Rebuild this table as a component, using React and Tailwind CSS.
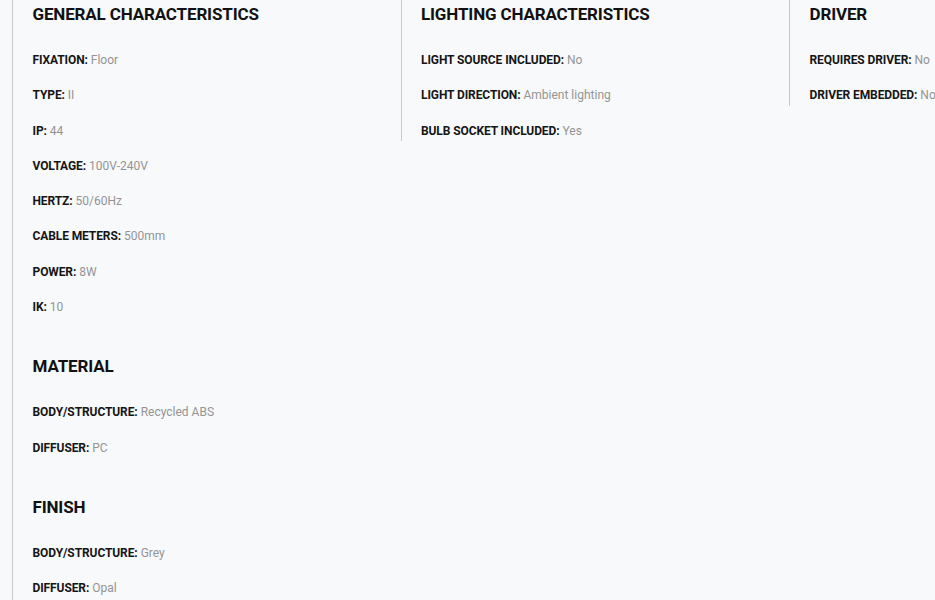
import React from "react";

const columns = [
  [
    {
      title: "GENERAL CHARACTERISTICS",
      rows: [
        ["FIXATION", "Floor"],
        ["TYPE", "II"],
        ["IP", "44"],
        ["VOLTAGE", "100V-240V"],
        ["HERTZ", "50/60Hz"],
        ["CABLE METERS", "500mm"],
        ["POWER", "8W"],
        ["IK", "10"],
      ],
    },
    {
      title: "MATERIAL",
      rows: [
        ["BODY/STRUCTURE", "Recycled ABS"],
        ["DIFFUSER", "PC"],
      ],
    },
    {
      title: "FINISH",
      rows: [
        ["BODY/STRUCTURE", "Grey"],
        ["DIFFUSER", "Opal"],
      ],
    },
  ],
  [
    {
      title: "LIGHTING CHARACTERISTICS",
      rows: [
        ["LIGHT SOURCE INCLUDED", "No"],
        ["LIGHT DIRECTION", "Ambient lighting"],
        ["BULB SOCKET INCLUDED", "Yes"],
      ],
    },
  ],
  [
    {
      title: "DRIVER",
      rows: [
        ["REQUIRES DRIVER", "No"],
        ["DRIVER EMBEDDED", "No"],
      ],
    },
  ],
];

const Section = ({ title, rows }) => (
  <div className="mb-[35px] last:mb-0">
    <h3 className="text-[17px] leading-[28px] font-bold tracking-[-0.15px] text-[#111]">
      {title}
    </h3>
    <div className="mt-[23px]">
      {rows.map(([label, value], i) => (
        <p
          key={i}
          className="text-[12px] leading-[19.3px] mb-[16px] last:mb-0 whitespace-nowrap"
        >
          <span className="font-bold text-[#151515] tracking-[-0.1px]">{label}:</span>{" "}
          <span className="text-[#949494]">{value}</span>
        </p>
      ))}
    </div>
  </div>
);

export default function App() {
  return (
    <div
      className="min-h-screen bg-[#f8f9fb] overflow-hidden"
      style={{ fontFamily: "Roboto, 'Noto Sans', sans-serif" }}
    >
      <div className="flex items-start pl-[12px] h-[600px]">
        {columns.map((sections, ci) => (
          <div
            key={ci}
            className={`w-[388.5px] shrink-0 border-l border-[#c9c9c9] pl-[19.5px] ${
              ci === 0 ? "self-stretch" : ""
            }`}
          >
            {sections.map((s, si) => (
              <Section key={si} {...s} />
            ))}
          </div>
        ))}
      </div>
    </div>
  );
}
